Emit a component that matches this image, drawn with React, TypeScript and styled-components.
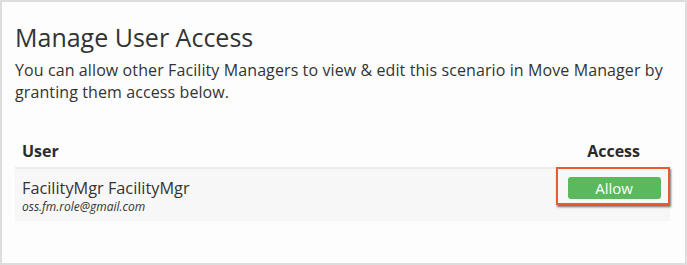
import styled, { createGlobalStyle } from "styled-components";

const GlobalStyle = createGlobalStyle`
  html, body {
    margin: 0;
    padding: 0;
    background: #ffffff;
  }
  body {
    font-family: "Open Sans", "Noto Sans", sans-serif;
    color: #333333;
  }
`;

const users = [
  { name: "FacilityMgr FacilityMgr", email: "oss.fm.role@gmail.com" },
];

const Panel = styled.div`
  box-sizing: border-box;
  width: 687px;
  height: 265px;
  border: 2px solid #dddddd;
  background: #fdfdfd;
  padding: 20px 15px 0 13px;
`;

const Title = styled.h2`
  margin: 0;
  font-size: 25px;
  font-weight: 400;
  line-height: 30px;
  color: #333333;
`;

const Intro = styled.p`
  margin: 6.5px 0 0;
  font-size: 16px;
  letter-spacing: 0.1px;
  line-height: 22px;
  color: #333333;
`;

const Table = styled.div`
  margin-top: 37px;
  display: flex;
  flex-direction: column;
`;

const HeaderRow = styled.div`
  display: flex;
  justify-content: space-between;
  align-items: flex-end;
  padding: 0 30px 5.5px 7px;
  border-bottom: 2px solid #ececec;
`;

const HeadCell = styled.div`
  font-size: 16px;
  font-weight: 700;
  line-height: 22px;
  color: #2b2b2b;
`;

const Row = styled.div`
  display: flex;
  justify-content: space-between;
  align-items: flex-start;
  background: #f7f7f7;
  height: 52px;
  padding: 0 7px;
`;

const UserCell = styled.div`
  display: flex;
  flex-direction: column;
  padding-top: 8px;
`;

const UserName = styled.span`
  font-size: 16.3px;
  line-height: 22px;
  color: #333333;
`;

const UserEmail = styled.span`
  font-size: 12px;
  font-style: italic;
  line-height: 16px;
  color: #333333;
`;

const Highlight = styled.div`
  margin-right: -7px;
  margin-top: -2px;
  padding: 7.5px 7.5px 4.5px 9.5px;
  border: 2.5px solid #ec5a2c;
  box-shadow: 1px 2px 2px rgba(0, 0, 0, 0.55);
`;

const AllowButton = styled.button`
  display: block;
  width: 93px;
  height: 22px;
  border: none;
  border-radius: 3px;
  background: #5cb85c;
  color: #ffffff;
  font-family: "Open Sans", "Noto Sans", sans-serif;
  font-size: 15px;
  line-height: 22px;
  padding: 0;
  cursor: pointer;
`;

export default function App() {
  return (
    <>
      <GlobalStyle />
      <Panel>
        <Title>Manage User Access</Title>
        <Intro>
          You can allow other Facility Managers to view &amp; edit this scenario
          in Move Manager by granting them access below.
        </Intro>
        <Table>
          <HeaderRow>
            <HeadCell>User</HeadCell>
            <HeadCell>Access</HeadCell>
          </HeaderRow>
          {users.map((u) => (
            <Row key={u.email}>
              <UserCell>
                <UserName>{u.name}</UserName>
                <UserEmail>{u.email}</UserEmail>
              </UserCell>
              <Highlight>
                <AllowButton>Allow</AllowButton>
              </Highlight>
            </Row>
          ))}
        </Table>
      </Panel>
    </>
  );
}
